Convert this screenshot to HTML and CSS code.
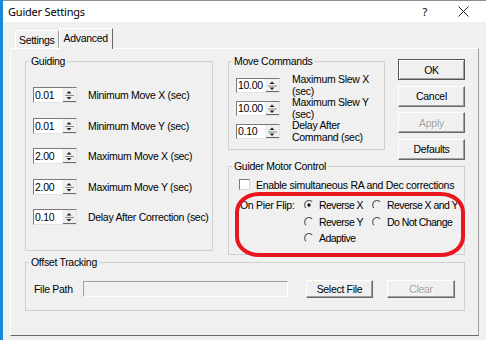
FILE: index.html
```html
<!DOCTYPE html>
<html lang="en">
<head>
    <meta charset="UTF-8">
    <title>Guider Settings</title>
    <link rel="stylesheet" href="styles.css">
</head>
<body>
<div class="window">
    <div class="titlebar">
        <span class="title">Guider Settings</span>
        <span class="help">?</span>
        <svg class="close" width="11" height="11" viewBox="0 0 11 11"><path d="M0.5 0.5 L10.5 10.5 M10.5 0.5 L0.5 10.5" stroke="#222" stroke-width="1"/></svg>
    </div>

    <div class="client">
        <div class="tabs">
            <div class="tab">Settings</div>
            <div class="tab active">Advanced</div>
        </div>

        <div class="page">
            <div class="grid">
                <!-- Guiding -->
                <fieldset class="group guiding">
                    <legend>Guiding</legend>
                    <div class="rows">
                        <div class="field">
                            <div class="spin"><span class="val">0.01</span><span class="arrows"><svg width="14" height="14" viewBox="0 0 14 14"><polygon points="4.5,5.5 9.5,5.5 7,3" fill="#222"/><line x1="3" y1="7.5" x2="12" y2="7.5" stroke="#8a8a8a"/><polygon points="4.5,9 9.5,9 7,11.5" fill="#222"/><line x1="1" y1="13.5" x2="14" y2="13.5" stroke="#696969"/></svg></span></div>
                            <span class="flabel">Minimum Move X (sec)</span>
                        </div>
                        <div class="field">
                            <div class="spin"><span class="val">0.01</span><span class="arrows"><svg width="14" height="14" viewBox="0 0 14 14"><polygon points="4.5,5.5 9.5,5.5 7,3" fill="#222"/><line x1="3" y1="7.5" x2="12" y2="7.5" stroke="#8a8a8a"/><polygon points="4.5,9 9.5,9 7,11.5" fill="#222"/><line x1="1" y1="13.5" x2="14" y2="13.5" stroke="#696969"/></svg></span></div>
                            <span class="flabel">Minimum Move Y (sec)</span>
                        </div>
                        <div class="field">
                            <div class="spin"><span class="val">2.00</span><span class="arrows"><svg width="14" height="14" viewBox="0 0 14 14"><polygon points="4.5,5.5 9.5,5.5 7,3" fill="#222"/><line x1="3" y1="7.5" x2="12" y2="7.5" stroke="#8a8a8a"/><polygon points="4.5,9 9.5,9 7,11.5" fill="#222"/><line x1="1" y1="13.5" x2="14" y2="13.5" stroke="#696969"/></svg></span></div>
                            <span class="flabel">Maximum Move X (sec)</span>
                        </div>
                        <div class="field">
                            <div class="spin"><span class="val">2.00</span><span class="arrows"><svg width="14" height="14" viewBox="0 0 14 14"><polygon points="4.5,5.5 9.5,5.5 7,3" fill="#222"/><line x1="3" y1="7.5" x2="12" y2="7.5" stroke="#8a8a8a"/><polygon points="4.5,9 9.5,9 7,11.5" fill="#222"/><line x1="1" y1="13.5" x2="14" y2="13.5" stroke="#696969"/></svg></span></div>
                            <span class="flabel">Maximum Move Y (sec)</span>
                        </div>
                        <div class="field">
                            <div class="spin"><span class="val">0.10</span><span class="arrows"><svg width="14" height="14" viewBox="0 0 14 14"><polygon points="4.5,5.5 9.5,5.5 7,3" fill="#222"/><line x1="3" y1="7.5" x2="12" y2="7.5" stroke="#8a8a8a"/><polygon points="4.5,9 9.5,9 7,11.5" fill="#222"/><line x1="1" y1="13.5" x2="14" y2="13.5" stroke="#696969"/></svg></span></div>
                            <span class="flabel">Delay After Correction (sec)</span>
                        </div>
                    </div>
                </fieldset>

                <!-- Move Commands -->
                <fieldset class="group move">
                    <legend>Move Commands</legend>
                    <div class="mrows">
                        <div class="mfield">
                            <div class="spin small"><span class="val">10.00</span><span class="arrows"><svg width="14" height="13" viewBox="0 0 14 13"><polygon points="4.5,5 9.5,5 7,2.5" fill="#222"/><line x1="3" y1="7" x2="12" y2="7" stroke="#8a8a8a"/><polygon points="4.5,8.5 9.5,8.5 7,11" fill="#222"/><line x1="1" y1="12.5" x2="14" y2="12.5" stroke="#696969"/></svg></span></div>
                            <span class="mlabel">Maximum Slew X (sec)</span>
                        </div>
                        <div class="mfield">
                            <div class="spin small"><span class="val">10.00</span><span class="arrows"><svg width="14" height="13" viewBox="0 0 14 13"><polygon points="4.5,5 9.5,5 7,2.5" fill="#222"/><line x1="3" y1="7" x2="12" y2="7" stroke="#8a8a8a"/><polygon points="4.5,8.5 9.5,8.5 7,11" fill="#222"/><line x1="1" y1="12.5" x2="14" y2="12.5" stroke="#696969"/></svg></span></div>
                            <span class="mlabel">Maximum Slew Y (sec)</span>
                        </div>
                        <div class="mfield">
                            <div class="spin small"><span class="val">0.10</span><span class="arrows"><svg width="14" height="13" viewBox="0 0 14 13"><polygon points="4.5,5 9.5,5 7,2.5" fill="#222"/><line x1="3" y1="7" x2="12" y2="7" stroke="#8a8a8a"/><polygon points="4.5,8.5 9.5,8.5 7,11" fill="#222"/><line x1="1" y1="12.5" x2="14" y2="12.5" stroke="#696969"/></svg></span></div>
                            <span class="mlabel">Delay After Command (sec)</span>
                        </div>
                    </div>
                </fieldset>

                <!-- Dialog buttons -->
                <div class="buttons">
                    <button class="btn default">OK</button>
                    <button class="btn">Cancel</button>
                    <button class="btn" disabled>Apply</button>
                    <button class="btn">Defaults</button>
                </div>

                <!-- Guider Motor Control -->
                <fieldset class="group motor">
                    <legend>Guider Motor Control</legend>
                    <div class="check-row">
                        <span class="checkbox"></span>
                        <span>Enable simultaneous RA and Dec corrections</span>
                    </div>
                    <div class="flip">
                        <span class="flip-label">On Pier Flip:</span>
                        <div class="radios">
                            <div class="radio"><svg width="10" height="10" viewBox="0 0 12 12"><path d="M2.3 9.7 A5.2 5.2 0 0 1 9.7 2.3" stroke="#555" stroke-width="1.3" fill="none"/><circle cx="6" cy="6" r="2" fill="#111"/></svg><span>Reverse X</span></div>
                            <div class="radio"><svg width="10" height="10" viewBox="0 0 12 12"><path d="M2.3 9.7 A5.2 5.2 0 0 1 9.7 2.3" stroke="#555" stroke-width="1.3" fill="none"/></svg><span>Reverse X and Y</span></div>
                            <div class="radio"><svg width="10" height="10" viewBox="0 0 12 12"><path d="M2.3 9.7 A5.2 5.2 0 0 1 9.7 2.3" stroke="#555" stroke-width="1.3" fill="none"/></svg><span>Reverse Y</span></div>
                            <div class="radio"><svg width="10" height="10" viewBox="0 0 12 12"><path d="M2.3 9.7 A5.2 5.2 0 0 1 9.7 2.3" stroke="#555" stroke-width="1.3" fill="none"/></svg><span>Do Not Change</span></div>
                            <div class="radio"><svg width="10" height="10" viewBox="0 0 12 12"><path d="M2.3 9.7 A5.2 5.2 0 0 1 9.7 2.3" stroke="#555" stroke-width="1.3" fill="none"/></svg><span>Adaptive</span></div>
                        </div>
                    </div>
                </fieldset>
            </div>

            <!-- Offset Tracking -->
            <fieldset class="group offset">
                <legend>Offset Tracking</legend>
                <div class="file-row">
                    <span class="file-label">File Path</span>
                    <span class="path"></span>
                    <button class="btn file-btn">Select File</button>
                    <button class="btn file-btn clear" disabled>Clear</button>
                </div>
            </fieldset>

            <!-- red highlight drawn over the dialog -->
            <div class="highlight"></div>
        </div>
    </div>
</div>
</body>
</html>
```

FILE: styles.css
```css
body { margin: 0; width: 486px; height: 340px; overflow: hidden; background: #f0f0f0; border-left: 3px solid #1a88d9; box-sizing: border-box; font-family: "Liberation Sans", Arial, sans-serif; font-size: 10.5px; letter-spacing: -0.3px; color: #000; }

.window { height: 340px; }

.titlebar { height: 22px; box-sizing: border-box; background: #fff; border-top: 1px solid #8c8c8c; display: flex; align-items: center; padding-left: 5px; }
.title { font-family: "Noto Sans", sans-serif; font-size: 11px; letter-spacing: -0.2px; flex: 1; }
.help { font-family: "Noto Sans", sans-serif; font-size: 11px; margin-right: 31px; }
.close { margin-right: 17px; }

.client { padding-left: 7px; }

.tabs { display: flex; align-items: flex-end; height: 27px; margin-bottom: -1px; padding-left: 5px; position: relative; z-index: 1; }
.tab { height: 18px; line-height: 18px; margin-bottom: 1px; padding: 0 3px; box-sizing: border-box; border-top: 1px solid #fff; border-left: 1px solid #fff; border-right: 1px solid #a0a0a0; background: #f0f0f0; }
.tab.active { height: 21px; line-height: 19px; margin-bottom: 0; padding: 0 4px; border-right-color: #696969; }

.page { position: relative; width: 469px; height: 288px; box-sizing: border-box; border: 1px solid; border-color: #fff #a0a0a0 #696969 #fff; padding: 6px 0 0 14px; }

.grid { display: grid; grid-template-columns: 203px 170px 67px; grid-template-rows: 105px 95px; }

.group { margin: 0; padding: 0 7px; min-width: 0; box-sizing: border-box; border: 1px solid #d0d0d0; }
.group legend { padding: 0 2px; margin-left: -4px; line-height: 13px; }

.guiding { grid-row: 1 / 3; width: 188px; height: 196px; align-self: start; }
.rows { display: flex; flex-direction: column; gap: 14.5px; margin-top: 19px; }
.field { display: flex; align-items: center; gap: 11px; height: 16px; }
.flabel { white-space: nowrap; }

.spin { display: flex; flex: none; width: 44px; height: 16px; box-sizing: border-box; border: 1px solid; border-color: #7a7a7a #e3e3e3 #e3e3e3 #7a7a7a; background: #fff; }
.spin .val { flex: 1; padding-left: 1px; line-height: 14px; }
.spin .arrows { width: 14px; background: #f0f0f0; display: flex; }
.spin.small { height: 15px; }
.spin.small .val { line-height: 13px; }

.move { width: 157px; height: 95px; }
.mrows { display: grid; grid-auto-rows: 23px; align-items: center; margin-top: 6px; }
.mfield { display: flex; align-items: center; gap: 12px; }
.mlabel { flex: 1; line-height: 11.5px; }

.buttons { display: flex; flex-direction: column; gap: 5.5px; padding-top: 4px; }
.btn { font-family: inherit; font-size: inherit; letter-spacing: inherit; color: #000; margin: 0; padding: 0; height: 21px; background: #f0f0f0; border: 1px solid; border-color: #fff #696969 #696969 #fff; box-shadow: inset -1px -1px #a0a0a0; }
.btn.default { border-color: #555; box-shadow: inset 1px 1px #fff, inset -1px -1px #a0a0a0; }
.btn:disabled { color: #a0a0a0; text-shadow: 1px 1px #fff; }

.motor { grid-column: 2 / 4; height: 95px; }
.check-row { display: flex; align-items: center; gap: 6px; margin-top: 5px; padding-left: 3px; height: 13px; white-space: nowrap; }
.checkbox { width: 11px; height: 11px; box-sizing: border-box; border: 1px solid; border-color: #7a7a7a #d8d8d8 #d8d8d8 #7a7a7a; background: #fff; }

.flip { display: flex; margin-top: 6px; }
.flip-label { flex: none; width: 64px; padding-left: 4px; line-height: 16.5px; white-space: nowrap; }
.radios { flex: none; display: grid; grid-template-columns: 68px auto; grid-auto-rows: 16.5px; }
.radio { display: flex; align-items: center; gap: 5px; white-space: nowrap; letter-spacing: -0.55px; }

.offset { width: 440px; height: 55px; margin-top: 1px; }
.file-row { display: flex; align-items: center; margin-top: 11px; }
.file-label { width: 49px; padding-left: 1px; }
.path { width: 205px; height: 16px; box-sizing: border-box; border: 1px solid; border-color: #a0a0a0 #fff #fff #a0a0a0; background: #f0f0f0; margin-right: 18px; }
.file-btn { width: 67px; height: 18px; margin-right: 14px; }
.clear { width: 68px; margin-right: 0; }

.highlight { position: absolute; left: 224px; top: 143px; width: 230px; height: 65px; box-sizing: border-box; border: 4px solid #e8161e; border-radius: 24px / 20px; }
```
